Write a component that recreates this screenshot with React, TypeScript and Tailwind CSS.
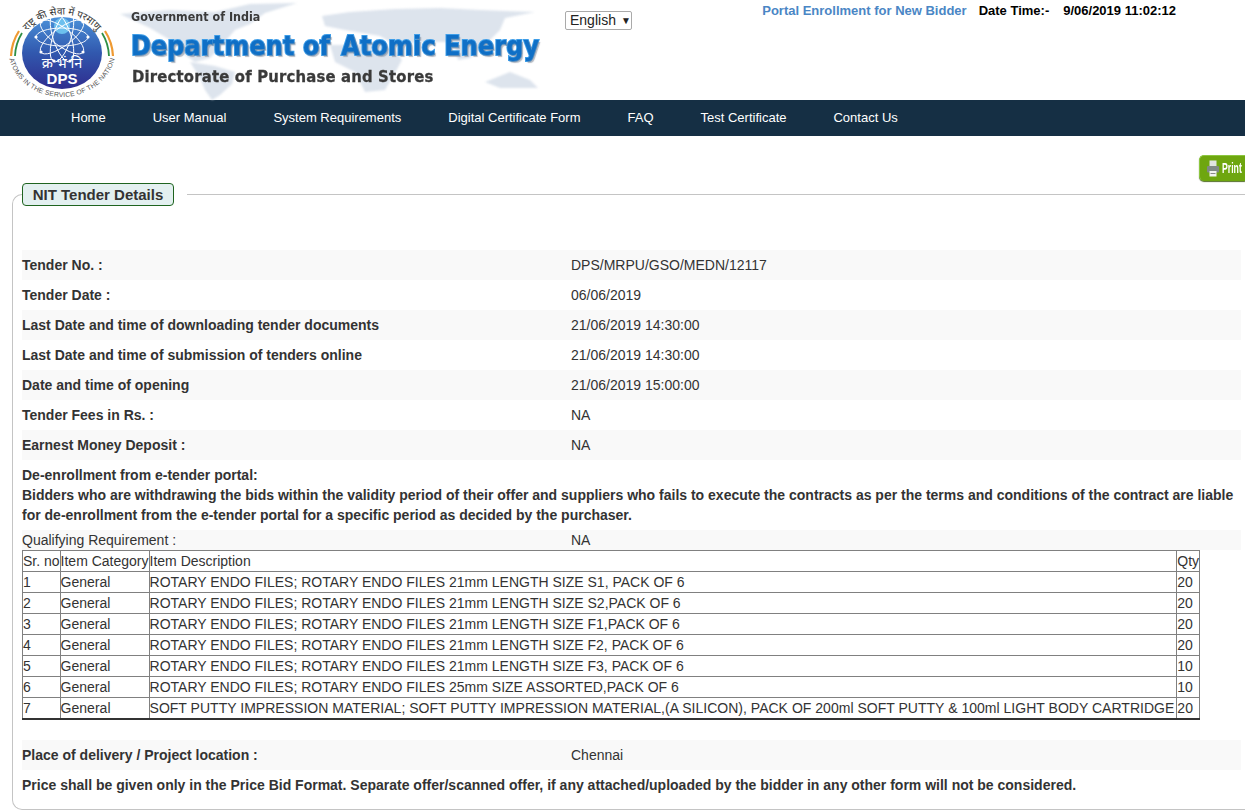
import React from 'react';

const navLinks = ['Home', 'User Manual', 'System Requirements', 'Digital Certificate Form', 'FAQ', 'Test Certificate', 'Contact Us'];

const topRows = [
  ['Tender No. :', 'DPS/MRPU/GSO/MEDN/12117'],
  ['Tender Date :', '06/06/2019'],
  ['Last Date and time of downloading tender documents', '21/06/2019 14:30:00'],
  ['Last Date and time of submission of tenders online', '21/06/2019 14:30:00'],
  ['Date and time of opening', '21/06/2019 15:00:00'],
  ['Tender Fees in Rs. :', 'NA'],
  ['Earnest Money Deposit :', 'NA'],
];

const items = [
  ['Sr. no', 'Item Category', 'Item Description', 'Qty'],
  ['1', 'General', 'ROTARY ENDO FILES; ROTARY ENDO FILES 21mm LENGTH SIZE S1, PACK OF 6', '20'],
  ['2', 'General', 'ROTARY ENDO FILES; ROTARY ENDO FILES 21mm LENGTH SIZE S2,PACK OF 6', '20'],
  ['3', 'General', 'ROTARY ENDO FILES; ROTARY ENDO FILES 21mm LENGTH SIZE F1,PACK OF 6', '20'],
  ['4', 'General', 'ROTARY ENDO FILES; ROTARY ENDO FILES 21mm LENGTH SIZE F2, PACK OF 6', '20'],
  ['5', 'General', 'ROTARY ENDO FILES; ROTARY ENDO FILES 21mm LENGTH SIZE F3, PACK OF 6', '10'],
  ['6', 'General', 'ROTARY ENDO FILES; ROTARY ENDO FILES 25mm SIZE ASSORTED,PACK OF 6', '10'],
  ['7', 'General', 'SOFT PUTTY IMPRESSION MATERIAL; SOFT PUTTY IMPRESSION MATERIAL,(A SILICON), PACK OF 200ml SOFT PUTTY & 100ml LIGHT BODY CARTRIDGE', '20'],
];

// logo is drawn in page coordinates, header starts at 0,0
const Logo = () => (
  <svg width="122" height="100" viewBox="0 0 122 100" className="shrink-0">
    <defs>
      <linearGradient id="disc" x1="0" y1="0" x2="0" y2="1">
        <stop offset="0" stopColor="#4a90d8" />
        <stop offset="0.5" stopColor="#3158ae" />
        <stop offset="1" stopColor="#2f2c8e" />
      </linearGradient>
      <path id="topArc" d="M20 46 A43 40 0 0 1 104 46" />
      <path id="botArc" d="M8 48 A54 49 0 0 0 116 48" />
    </defs>
    <ellipse cx="62" cy="53" rx="40" ry="36" fill="url(#disc)" />
    <circle cx="62" cy="26" r="8" fill="#6cc0ee" />
    <g fill="none" stroke="#fff" strokeWidth="0.9">
      <ellipse cx="62" cy="37" rx="26" ry="9" />
      <ellipse cx="62" cy="37" rx="26" ry="9" transform="rotate(36 62 37)" />
      <ellipse cx="62" cy="37" rx="26" ry="9" transform="rotate(72 62 37)" />
      <ellipse cx="62" cy="37" rx="26" ry="9" transform="rotate(108 62 37)" />
      <ellipse cx="62" cy="37" rx="26" ry="9" transform="rotate(144 62 37)" />
    </g>
    <g fill="#fff">
      <circle cx="36" cy="37" r="1.6" />
      <circle cx="88" cy="37" r="1.6" />
      <circle cx="41" cy="22" r="1.6" />
      <circle cx="83" cy="22" r="1.6" />
      <circle cx="41" cy="52" r="1.6" />
      <circle cx="83" cy="52" r="1.6" />
      <circle cx="54" cy="61" r="1.6" />
      <circle cx="70" cy="61" r="1.6" />
    </g>
    <path d="M11 56 A50 50 0 0 1 19 31" fill="none" stroke="#ef9a32" strokeWidth="2.2" />
    <path d="M15 56 A47 47 0 0 1 22 33" fill="none" stroke="#2f8f45" strokeWidth="1.8" />
    <path d="M113 56 A50 50 0 0 0 105 31" fill="none" stroke="#ef9a32" strokeWidth="2.2" />
    <path d="M109 56 A47 47 0 0 0 102 33" fill="none" stroke="#2f8f45" strokeWidth="1.8" />
    <text x="62" y="68" textAnchor="middle" fill="#fff" fontSize="14.5" fontFamily="'Noto Sans', sans-serif">क्र भं नि</text>
    <text x="62" y="84" textAnchor="middle" fill="#fff" fontSize="15" fontWeight="700" fontFamily="'Liberation Sans', sans-serif">DPS</text>
    <text fill="#333" fontSize="10" textAnchor="middle" fontFamily="'Noto Sans', sans-serif">
      <textPath href="#topArc" startOffset="50%">राष्ट्र की सेवा में परमाणु</textPath>
    </text>
    <text fill="#555" fontSize="6.8" letterSpacing="0.2" textAnchor="middle" fontFamily="'Liberation Sans', sans-serif">
      <textPath href="#botArc" startOffset="50%">ATOMS IN THE SERVICE OF THE NATION</textPath>
    </text>
  </svg>
);

const WorldMap = () => (
  <svg width="560" height="100" viewBox="0 0 560 100" className="absolute top-0 left-0 blur-[1px]" fill="#dde4ed">
    <path d="M120 14 L170 10 L215 12 L250 4 L297 3 L265 13 L250 24 L235 30 L222 45 L210 58 L195 62 L185 55 L170 40 L150 28Z" />
    <path d="M190 62 L215 66 L235 72 L232 84 L220 95 L212 100 L205 90 L200 78Z" />
    <path d="M322 16 L350 12 L395 9 L440 8 L480 10 L535 12 L505 18 L500 30 L490 40 L478 50 L470 58 L458 60 L455 45 L445 42 L420 42 L395 45 L380 36 L345 30 L325 26Z" />
    <path d="M330 45 L380 45 L395 50 L402 60 L392 78 L385 90 L365 92 L355 72 L335 62Z" />
    <path d="M485 82 L510 72 L530 80 L538 88 L500 88Z" />
  </svg>
);

const Header = () => (
  <div className="relative flex h-[100px] bg-white">
    <WorldMap />
    <div className="relative flex h-[100px] w-[545px]">
      <Logo />
      <div className="ml-[9px] text-[#3a3a3a]">
        <div className="origin-left scale-x-[0.93] pt-[9px] font-['DejaVu_Sans'] text-[12px] leading-[16px] font-bold whitespace-nowrap">Government of India</div>
        <div className="mt-[5px] origin-left scale-x-[0.9] font-['DejaVu_Sans'] text-[26.5px] leading-[32px] font-bold tracking-[0.2px] whitespace-nowrap text-[#0f6fc6] [paint-order:stroke_fill] [text-shadow:2px_2px_1px_rgba(120,130,145,0.55)] [-webkit-text-stroke:2px_#3f9ee8]">
          Department of <span className="ml-[3px]">Atomic Energy</span>
        </div>
        <div className="mt-[5px] ml-px origin-left scale-x-[0.9] font-['DejaVu_Sans'] text-[16.5px] leading-[20px] font-bold tracking-[0.2px] whitespace-nowrap [-webkit-text-stroke:0.3px_#3a3a3a]">Directorate of Purchase and Stores</div>
      </div>
    </div>
    <div className="relative ml-[20px] pt-[11px]">
      <div className="flex h-[19px] w-[67px] items-center rounded-[2px] border border-[#aaa] bg-white pl-[4px] text-[14px] text-[#222]">
        English<span className="ml-[5px] text-[10px]">▼</span>
      </div>
    </div>
    <div className="relative ml-auto flex h-fit items-center pt-[3px] pr-[69px] text-[13px] leading-[16px] font-bold">
      <span className="text-[#4a86c5]">Portal Enrollment for New Bidder</span>
      <span className="ml-[12px] text-black">Date Time:-</span>
      <span className="ml-[14px] text-black">9/06/2019 11:02:12</span>
    </div>
  </div>
);

const PrintIcon = () => (
  <svg width="12" height="17" viewBox="0 0 12 17" className="shrink-0">
    <rect x="2.5" y="0.5" width="7" height="6" fill="#dfe5e0" />
    <rect x="0" y="6" width="12" height="6.5" rx="1" fill="#7f8a85" />
    <rect x="2.5" y="11" width="7" height="5.5" fill="#f2f4f2" />
    <rect x="3.5" y="13" width="5" height="1" fill="#8a8a8a" />
  </svg>
);

const Row = ({ label, value }: { label: string; value: string }) => (
  <div className="flex h-[30px] items-center odd:bg-[#f9f9f9]">
    <div className="w-[549px] font-bold">{label}</div>
    <div>{value}</div>
  </div>
);

export default function App() {
  return (
    <div className="h-[810px] overflow-hidden bg-white font-['Liberation_Sans',sans-serif] text-[14px] text-[#333]">
      <Header />
      <nav className="flex h-[36px] items-center gap-[47px] bg-[#152f44] pl-[71px] text-[13px] text-white">
        {navLinks.map((link) => (
          <a key={link}>{link}</a>
        ))}
      </nav>
      <div className="relative h-[47px]">
        <div className="absolute top-[19px] left-[1199px] flex h-[26px] w-[46px] items-center gap-[3px] overflow-hidden rounded-l-[5px] border-t border-l border-[#8cc63f] bg-[#6ea60f] pl-[7px] shadow-[0_1px_1px_#55702a]">
          <PrintIcon />
          <span className="origin-left scale-x-[0.62] text-[14px] font-bold text-white">Print</span>
        </div>
      </div>
      <fieldset className="ml-[12px] w-[1300px] rounded-l-[10px] border-y border-l border-[#c4c4c4] pb-[14px] pl-[9px]">
        <legend className="ml-0 pr-[13px]">
          <span className="block h-[23px] w-[152px] rounded-[4px] border border-[#1f6420] bg-[#e3f0f0] text-center text-[15px] leading-[22px] font-bold">NIT Tender Details</span>
        </legend>
        <div className="w-[1219px] pt-[44px]">
          <div>
            {topRows.map((r) => (
              <Row key={r[0]} label={r[0]} value={r[1]} />
            ))}
          </div>
          <div className="py-[5px] leading-[20px] font-bold">
            <div>De-enrollment from e-tender portal:</div>
            <div>Bidders who are withdrawing the bids within the validity period of their offer and suppliers who fails to execute the contracts as per the terms and conditions of the contract are liable for de-enrollment from the e-tender portal for a specific period as decided by the purchaser.</div>
          </div>
          <div className="flex h-[20px] items-center bg-[#f9f9f9]">
            <div className="w-[549px]">Qualifying Requirement :</div>
            <div>NA</div>
          </div>
          <table className="border-collapse border border-b-2 border-[#333] leading-[20px] whitespace-nowrap">
            <tbody>
              {items.map((it) => (
                <tr key={it[0]} className="last:tracking-[0.02px]">
                  <td className="border border-[#808080] p-0">{it[0]}</td>
                  <td className="border border-[#808080] p-0">{it[1]}</td>
                  <td className="border border-[#808080] p-0 pr-[2px]">{it[2]}</td>
                  <td className="border border-[#808080] p-0">{it[3]}</td>
                </tr>
              ))}
            </tbody>
          </table>
          <div className="mt-[20px] flex h-[30px] items-center bg-[#f9f9f9]">
            <div className="w-[549px] font-bold">Place of delivery / Project location :</div>
            <div>Chennai</div>
          </div>
          <div className="pt-[5px] leading-[20px] font-bold">Price shall be given only in the Price Bid Format. Separate offer/scanned offer, if any attached/uploaded by the bidder in any other form will not be considered.</div>
        </div>
      </fieldset>
    </div>
  );
}
